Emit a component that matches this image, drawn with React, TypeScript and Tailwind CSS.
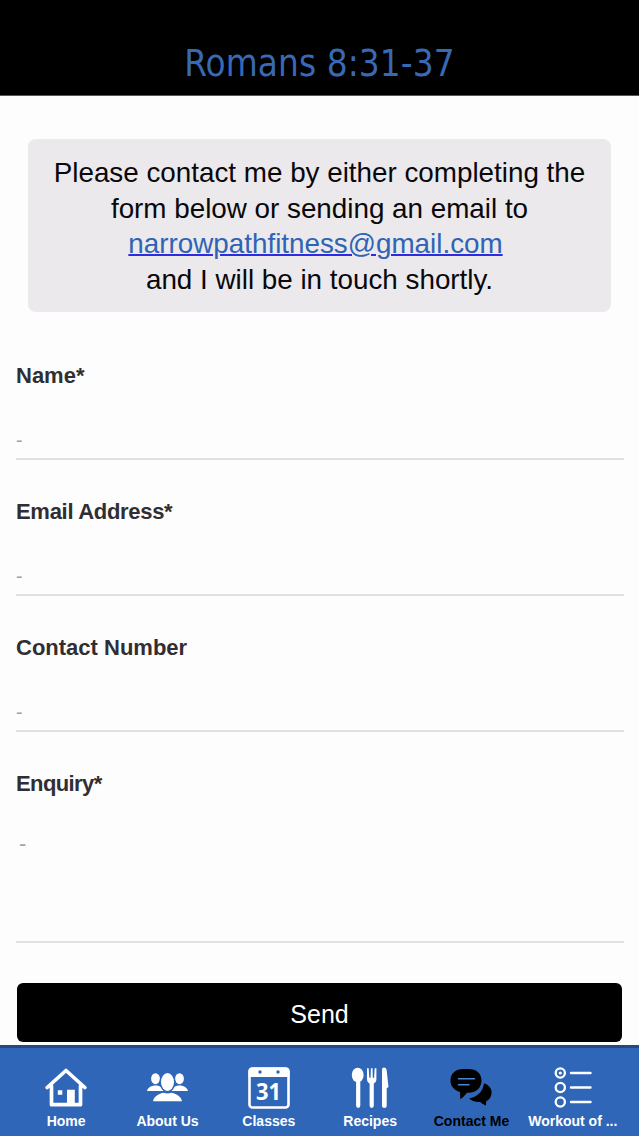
import type { ReactNode } from "react";

function HomeIcon() {
  return (
    <svg width="42" height="42" viewBox="0 0 42 42" fill="none">
      <path d="M2.200 20.500 21 3.500 39.800 20.500M6.500 19V37.700H35.500V19" stroke="white" strokeWidth="3.700" strokeLinejoin="round" strokeLinecap="round" />
      <path d="M12.800 23.200h4.500v4.500h-4.500zM22 22.700h7.800V38h-7.800z" fill="white" />
    </svg>
  );
}

function PeopleIcon() {
  return (
    <svg width="42" height="42" viewBox="0 0 42 42" fill="white">
      <ellipse cx="9.500" cy="11.700" rx="4.400" ry="5.500" />
      <ellipse cx="33.500" cy="11.700" rx="4.400" ry="5.500" />
      <path d="M1 24c1-4 5-5.500 8.500-5.500 2.500 0 4.300.4 6 2L17.500 24zM42 24c-1-4-5-5.500-8.500-5.500-2.500 0-4.300.4-6 2L25.500 24z" />
      <ellipse cx="21.500" cy="15" rx="8" ry="10.300" fill="#2f66b8" />
      <ellipse cx="21.500" cy="15" rx="6.500" ry="9" />
      <path d="M7 34.300C8 28.500 14.500 26.300 17.500 25.800q4 1.600 8 0c3 .5 9.500 2.700 10.500 8.500z" />
    </svg>
  );
}

function CalendarIcon() {
  return (
    <svg width="42" height="42" viewBox="0 0 42 42">
      <rect x="1.500" y="1.500" width="39" height="39" rx="3" fill="none" stroke="white" strokeWidth="2.600" />
      <path d="M.5 10V4a3.500 3.500 0 0 1 3.500-3.500h34a3.500 3.500 0 0 1 3.500 3.500v6z" fill="white" />
      <circle cx="12" cy="5" r="1.700" fill="#2f66b8" />
      <circle cx="30" cy="5" r="1.700" fill="#2f66b8" />
      <text x="20.500" y="32.500" textAnchor="middle" fill="white" fontSize="23.500" fontWeight="700" fontFamily="Open Sans, sans-serif" textLength="25" lengthAdjust="spacingAndGlyphs">31</text>
    </svg>
  );
}

function CutleryIcon() {
  return (
    <svg width="42" height="42" viewBox="0 0 42 42" fill="white">
      <ellipse cx="8.700" cy="8" rx="5.900" ry="7.300" />
      <path d="M9.200 12V38.800M22.700 14V38.800" stroke="white" strokeWidth="4.200" strokeLinecap="round" />
      <path d="M18 1.300h1.700l.6 9.500h1.300l.3-9.500h1.600l.3 9.500h1.300l.6-9.500h1.700V12c0 3-1.700 4-2.700 4.500h-4c-1-.5-2.700-1.500-2.700-4.500z" />
      <path d="M33 3c0-3.200 3.800-3.200 4.600 0l1.900 17-1.800 1.200v17.500c0 3-4.700 3-4.700 0z" />
    </svg>
  );
}

function ChatIcon() {
  return (
    <svg width="42" height="42" viewBox="0 0 42 42" fill="#000">
      <path d="M34 16.200c5.500 2 8 6 7.500 10-.3 4-2.300 6.500-5.300 8l-.2 4.300c-2.500-.8-4.300-2-5.700-3.500-5 .3-9-1-11.300-3.700 8-1.300 14-6.300 15-15.100z" />
      <path d="M13.500 2h5c8 0 13 4.500 13 11.500s-5 12.300-13 12.300H17c-2 2.500-3.700 4.700-6.700 6.500l-.3-7.300C4 23 .5 19.500.5 13.500.5 6.500 5.500 2 13.500 2z" />
      <path d="M8.500 11.700h16M8.500 17.700h10.500" stroke="#4b83d3" strokeWidth="1.500" strokeLinecap="round" />
    </svg>
  );
}

function ListIcon() {
  return (
    <svg width="42" height="42" viewBox="0 0 42 42" fill="none" stroke="white">
      <g strokeWidth="2.300">
        <circle cx="8.300" cy="6" r="4.600" />
        <circle cx="8.300" cy="20.500" r="4.600" />
        <circle cx="8.300" cy="35" r="4.600" />
      </g>
      <circle cx="8.300" cy="6" r="1.600" fill="white" stroke="none" />
      <path d="M19 6h19.500M19 20.500h19.500M19 35h19.500" strokeWidth="2.400" strokeLinecap="round" />
    </svg>
  );
}

function Field({ label, tracking = "", tall = false }: { label: string; tracking?: string; tall?: boolean }) {
  return (
    <div className={tall ? "flex h-[189px] flex-col border-b-2 border-[#e1e0e3]" : "mb-[22px] flex h-[114px] flex-col border-b-2 border-[#e1e0e3]"}>
      <label className={`pt-[15px] text-[22px] leading-[30px] font-bold text-[#302e33] ${tracking}`}>{label}</label>
      <span className={tall ? "mt-[30px] pl-[3px] text-[22px] leading-[30px] text-[#a5a3a8]" : "mt-[34px] text-[20px] leading-[30px] text-[#a5a3a8]"}>-</span>
    </div>
  );
}

function Tab({ icon, label, active = false }: { icon: ReactNode; label: string; active?: boolean }) {
  return (
    <div className="flex flex-1 flex-col items-center pt-[19px]">
      {icon}
      <span className={active ? "mt-[2px] text-[14px] leading-[20px] font-bold whitespace-nowrap text-black" : "mt-[2px] text-[14px] leading-[20px] font-bold whitespace-nowrap text-white"}>{label}</span>
    </div>
  );
}

export default function App() {
  return (
    <div className="flex h-[1136px] w-[639px] flex-col overflow-hidden bg-[#fdfdfd] font-['Liberation_Sans',Arial,sans-serif]">
      <header className="flex h-[96px] shrink-0 justify-center border-b border-[#555] bg-black pt-[42px]">
        <h1 className="font-['DejaVu_Sans_Condensed','DejaVu_Sans',sans-serif] text-[36.500px] leading-[44px] tracking-[0.100px] whitespace-nowrap text-[#3869b5]">Romans 8:31-37</h1>
      </header>
      <section className="mx-[28px] mt-[43px] h-[173px] shrink-0 rounded-[8px] bg-[#ebe9eb] pt-[16px] text-center text-[27.800px] leading-[35.700px] whitespace-nowrap text-[#09080b]">
        <p>Please contact me by either completing the</p>
        <p>form below or sending an email to</p>
        <p className="pr-[8px]"><a className="text-[#2e63b5] underline decoration-[#302be0] decoration-2">narrowpathfitness@gmail.com</a></p>
        <p>and I will be in touch shortly.</p>
      </section>
      <form className="mr-[15px] ml-[16px] mt-[34px] flex shrink-0 flex-col">
        <Field label="Name*" />
        <Field label="Email Address*" tracking="tracking-[-0.300px]" />
        <Field label="Contact Number" />
        <Field label="Enquiry*" tracking="tracking-[-0.600px]" tall />
        <button type="button" className="mr-[2px] ml-px mt-[40px] h-[59px] rounded-[6px] bg-black pt-[5px] text-[25px] text-white">Send</button>
      </form>
      <nav className="mt-auto flex h-[91px] shrink-0 border-t-[3px] border-[#28477f] bg-[#2f66b8] px-[15.500px]">
        <Tab icon={<HomeIcon />} label="Home" />
        <Tab icon={<PeopleIcon />} label="About Us" />
        <Tab icon={<CalendarIcon />} label="Classes" />
        <Tab icon={<CutleryIcon />} label="Recipes" />
        <Tab icon={<ChatIcon />} label="Contact Me" active />
        <Tab icon={<ListIcon />} label="Workout of ..." />
      </nav>
    </div>
  );
}
